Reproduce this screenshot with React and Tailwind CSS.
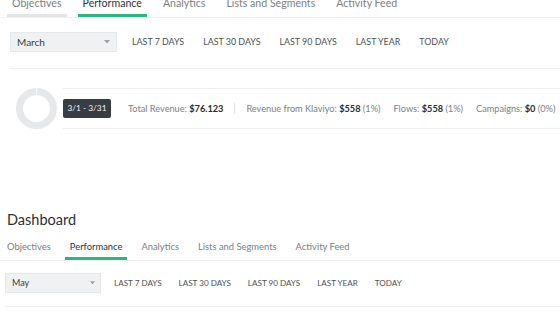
import React from 'react';

const font = { fontFamily: 'Lato, "Open Sans", sans-serif' };

const tabs = ['Objectives', 'Performance', 'Analytics', 'Lists and Segments', 'Activity Feed'];
const ranges = ['LAST 7 DAYS', 'LAST 30 DAYS', 'LAST 90 DAYS', 'LAST YEAR', 'TODAY'];

const Caret = ({ className }) => (
  <svg viewBox="0 0 6 4" className={className}>
    <path d="M0 0 L6 0 L3 3.5 Z" fill="#9aa0a5" />
  </svg>
);

const Donut = () => (
  <svg viewBox="0 0 41 41" className="w-[41px] h-[41px] shrink-0">
    <circle
      cx="20.5"
      cy="20.5"
      r="17"
      fill="none"
      stroke="#e6e8e9"
      strokeWidth="7"
      strokeDasharray="105.3 1.5"
      transform="rotate(-88 20.5 20.5)"
    />
  </svg>
);

const Stat = ({ label, value, pct }) => (
  <span className="text-[#7b8287]">
    {label}: <b className="font-bold text-[#262c31]">{value}</b>
    {pct && <span> {pct}</span>}
  </span>
);

export default function App() {
  return (
    <div className="w-[560px] h-[315px] overflow-hidden bg-white" style={font}>
      {/* top, zoomed-in view */}
      <div className="-mt-[5px]">
        <div className="flex gap-[11px] pl-[7px] border-b border-[#eceeef]">
          {tabs.map((t, i) => (
            <div
              key={t}
              className={`px-[5px] pb-[3px] text-[10.6px] leading-[16px] border-b-[3px] ${
                i === 1
                  ? 'border-[#2fb67c] text-[#2f353a]'
                  : i === 0
                  ? 'border-[#e3e5e6] text-[#7a8186]'
                  : 'border-transparent text-[#7a8186]'
              }`}
            >
              {t}
            </div>
          ))}
        </div>
        <div className="ml-[10px] pt-[14px] pb-[16px] border-b border-[#eceeef] flex items-center">
          <div className="w-[107px] h-[20px] bg-[#eff1f2] border border-[#e6e8e9] flex items-center justify-between pl-[6px] pr-[6px] text-[10px] text-[#3a4045]">
            <span>March</span>
            <Caret className="w-[6px] h-[4px]" />
          </div>
          <div className="flex gap-[19px] ml-[15px] text-[8.9px] text-[#4c5358]">
            {ranges.map((r) => (
              <span key={r}>{r}</span>
            ))}
          </div>
        </div>
        <div className="flex items-center mt-[19px] pl-[16px] gap-[6px]">
          <Donut />
          <div className="flex-1 h-[41px] border-y border-[#eceeef] flex items-center text-[9.2px] whitespace-nowrap">
            <div className="h-[19px] w-[48px] justify-center bg-[#373d42] rounded-[2px] text-[#f4f5f6] flex items-center text-[8.3px] font-normal">
              3/1 - 3/31
            </div>
            <div className="ml-[17px]">
              <Stat label="Total Revenue" value="$76.123" />
            </div>
            <div className="mx-[11px] w-px h-[11px] bg-[#e3e5e6]" />
            <div className="flex gap-[13px]">
              <Stat label="Revenue from Klaviyo" value="$558" pct="(1%)" />
              <Stat label="Flows" value="$558" pct="(1%)" />
              <Stat label="Campaigns" value="$0" pct="(0%)" />
            </div>
          </div>
        </div>
      </div>

      {/* bottom, normal view */}
      <div className="mt-[81px]">
        <h1 className="pl-[7px] text-[14.5px] leading-[20px] text-[#2a3035]">Dashboard</h1>
        <div className="mt-[10px] flex gap-[9px] pl-[2px] border-b border-[#eceeef]">
          {tabs.map((t, i) => (
            <div
              key={t}
              className={`px-[5px] pb-[3px] text-[9.4px] leading-[14px] border-b-[3px] ${
                i === 1 ? 'border-[#2fb67c] text-[#2f353a]' : 'border-transparent text-[#7a8186]'
              }`}
            >
              {t}
            </div>
          ))}
        </div>
        <div className="ml-[5px] pt-[12px] pb-[13px] border-b border-[#eceeef] flex items-center">
          <div className="w-[96px] h-[20px] bg-[#eff1f2] border border-[#e6e8e9] flex items-center justify-between pl-[6px] pr-[5px] text-[9px] text-[#3a4045]">
            <span>May</span>
            <Caret className="w-[5px] h-[4px]" />
          </div>
          <div className="flex gap-[17px] ml-[13px] text-[8.1px] text-[#4c5358]">
            {ranges.map((r) => (
              <span key={r}>{r}</span>
            ))}
          </div>
        </div>
      </div>
    </div>
  );
}
